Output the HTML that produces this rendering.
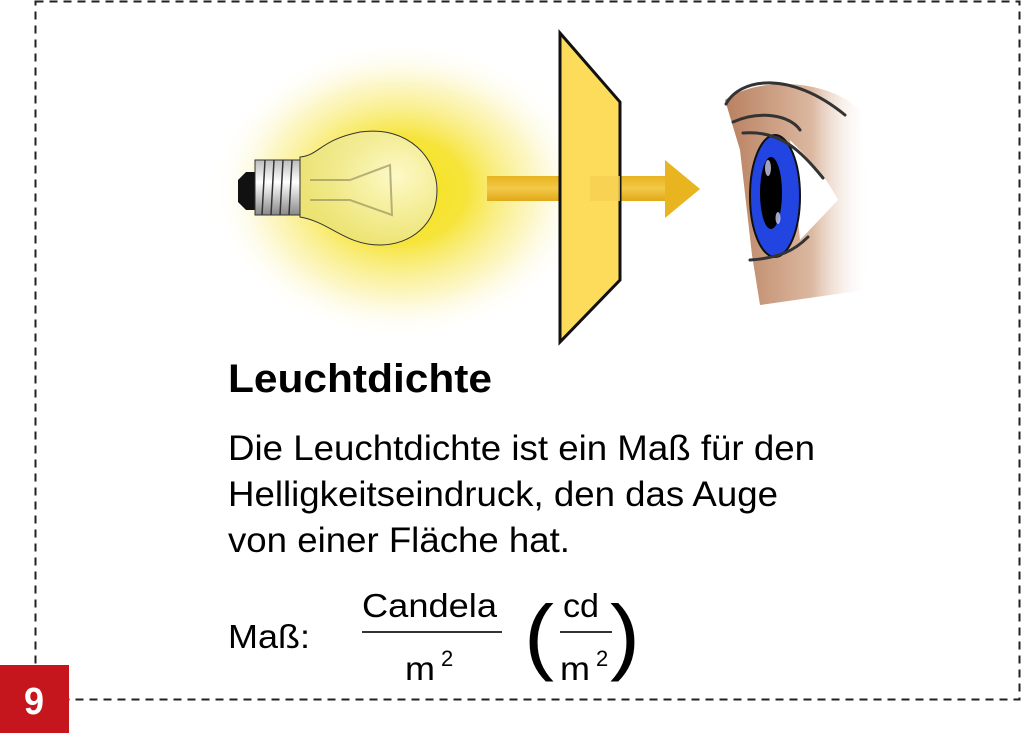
<!DOCTYPE html>
<html><head><meta charset="utf-8"><style>
html,body{margin:0;padding:0;background:#fff;}
body{width:1024px;height:739px;overflow:hidden;position:relative;font-family:"Liberation Sans",Arial,sans-serif;}
</style></head><body>
<svg width="1024" height="739" viewBox="0 0 1024 739" xmlns="http://www.w3.org/2000/svg" style="position:absolute;left:0;top:0">
<defs>
<radialGradient id="glow" cx="0.5" cy="0.5" r="0.5">
<stop offset="0" stop-color="#f5e21a"/>
<stop offset="0.35" stop-color="#f6e43a"/>
<stop offset="0.7" stop-color="#fbf2a8" stop-opacity="0.7"/>
<stop offset="1" stop-color="#fff" stop-opacity="0"/>
</radialGradient>
<radialGradient id="glass" cx="0.7" cy="0.4" r="0.7">
<stop offset="0" stop-color="#fffff0"/>
<stop offset="0.5" stop-color="#f3efb0"/>
<stop offset="1" stop-color="#e8e070"/>
</radialGradient>
<linearGradient id="arr" x1="0" y1="0" x2="0" y2="1">
<stop offset="0" stop-color="#e8b420"/>
<stop offset="0.5" stop-color="#f3c948"/>
<stop offset="1" stop-color="#e0a818"/>
</linearGradient>
<linearGradient id="skin" x1="0" y1="0" x2="1" y2="0">
<stop offset="0" stop-color="#b98060"/>
<stop offset="0.6" stop-color="#dcb8a0"/>
<stop offset="1" stop-color="#fff" stop-opacity="0"/>
</linearGradient>
<linearGradient id="screw" x1="0" y1="0" x2="0" y2="1">
<stop offset="0" stop-color="#bbb"/><stop offset="0.4" stop-color="#fff"/><stop offset="1" stop-color="#888"/>
</linearGradient>
</defs>
<rect x="35.5" y="1.5" width="984" height="698" fill="none" stroke="#222" stroke-width="2" stroke-dasharray="8,6"/>
<ellipse cx="400" cy="190" rx="190" ry="150" fill="url(#glow)"/>
<path d="M238 180 L246 172 L255 172 L255 210 L246 210 L238 202 Z" fill="#111"/>
<rect x="255" y="160" width="45" height="55" fill="url(#screw)" stroke="#333"/>
<g stroke="#333" stroke-width="1.5"><line x1="265" y1="160" x2="262" y2="215"/><line x1="274" y1="160" x2="271" y2="215"/><line x1="283" y1="160" x2="280" y2="215"/><line x1="292" y1="160" x2="289" y2="215"/></g>
<path d="M300 157 C320 155 320 140 360 132 C410 125 437 160 437 190 C437 225 410 245 380 245 C345 245 330 222 300 217 Z" fill="url(#glass)" fill-opacity="0.8" stroke="#333" stroke-width="1"/>
<path d="M310 180 L350 180 L390 165 L392 215 L350 200 L310 200" fill="none" stroke="#9a9460" stroke-width="2" opacity="0.7"/>
<rect x="487" y="176" width="73" height="25" fill="url(#arr)"/>
<rect x="590" y="176" width="75" height="25" fill="url(#arr)"/>
<path d="M665 160 L700 189 L665 218 Z" fill="#e8b420"/>
<path d="M560 33 L620 102 L620 280 L560 342 Z" fill="#fcdc5a" stroke="#111" stroke-width="3"/>
<rect x="590" y="176" width="30" height="25" fill="#f6cf50" opacity="0.8"/>
<path d="M725 100 C760 75 830 80 860 110 L870 200 L865 290 L760 305 L752 255 L740 150 Z" fill="url(#skin)"/>
<path d="M790 140 C810 160 825 175 838 200 L800 240 Z" fill="#fff"/>
<ellipse cx="775" cy="196" rx="25" ry="61" fill="#2244e0" stroke="#111" stroke-width="2"/>
<ellipse cx="771" cy="193" rx="11" ry="36" fill="#000"/>
<ellipse cx="768" cy="168" rx="3" ry="8" fill="#cce" opacity="0.8"/>
<ellipse cx="778" cy="218" rx="2.5" ry="6" fill="#cce" opacity="0.8"/>
<g fill="none" stroke="#333" stroke-width="3" stroke-linecap="round">
<path d="M726 104 C740 78 790 70 845 115"/>
<path d="M733 122 C760 110 790 115 800 130"/>
<path d="M743 133 C780 130 800 150 823 178"/>
<path d="M750 260 C780 258 795 250 808 237"/>
</g>
<text x="228" y="392" font-family="Liberation Sans, Arial, sans-serif" font-weight="bold" font-size="40" textLength="264" lengthAdjust="spacingAndGlyphs">Leuchtdichte</text>
<g font-family="Liberation Sans, Arial, sans-serif" font-size="35" fill="#000">
<text x="228" y="460" textLength="587" lengthAdjust="spacingAndGlyphs">Die Leuchtdichte ist ein Maß für den</text>
<text x="228" y="506" textLength="550" lengthAdjust="spacingAndGlyphs">Helligkeitseindruck, den das Auge</text>
<text x="228" y="552" textLength="342" lengthAdjust="spacingAndGlyphs">von einer Fläche hat.</text>
<text x="228" y="648" font-size="33" textLength="82" lengthAdjust="spacingAndGlyphs">Maß:</text>
<text x="362" y="617" font-size="33" textLength="135" lengthAdjust="spacingAndGlyphs">Candela</text>
<text x="405" y="680" font-size="33" textLength="30" lengthAdjust="spacingAndGlyphs">m</text>
<text x="441" y="666" font-size="22">2</text>
<text x="563" y="617" font-size="33" textLength="36" lengthAdjust="spacingAndGlyphs">cd</text>
<text x="560" y="680" font-size="33" textLength="30" lengthAdjust="spacingAndGlyphs">m</text>
<text x="596" y="666" font-size="22">2</text>
<text x="524" y="664" font-size="84" textLength="30" lengthAdjust="spacingAndGlyphs">(</text>
<text x="610" y="664" font-size="84" textLength="30" lengthAdjust="spacingAndGlyphs">)</text>
</g>
<rect x="362" y="631" width="140" height="2" fill="#333"/>
<rect x="560" y="631" width="52" height="2" fill="#333"/>
<rect x="0" y="665" width="69" height="68" fill="#c4161c"/>
<text x="34" y="714" text-anchor="middle" font-family="Liberation Sans, Arial, sans-serif" font-weight="bold" font-size="38" fill="#fff" textLength="20" lengthAdjust="spacingAndGlyphs">9</text>
</svg>
</body></html>
